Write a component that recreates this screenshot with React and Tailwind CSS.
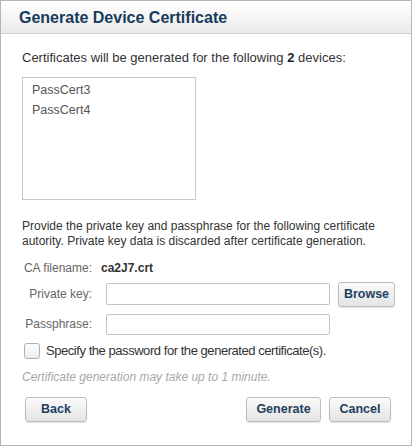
const devices = ['PassCert3', 'PassCert4'];

const Button = ({ children, className = '' }) => (
  <button
    className={`shrink-0 h-[25px] rounded-[3px] border border-[#bdbdbd] bg-gradient-to-b from-[#fbfbfb] to-[#e4e4e4] text-[12.5px] font-bold text-[#1e3f5f] shadow-[0_1px_1px_rgba(0,0,0,0.12)] ${className}`}
  >
    {children}
  </button>
);

const App = () => {
  return (
    <div className="w-[413px] h-[448px] bg-white" style={{ fontFamily: '"Liberation Sans", Arial, sans-serif' }}>
      <div className="w-[412px] h-[446px] border border-[#b5b5b5] flex flex-col">
        <div className="h-[33px] shrink-0 border-b border-[#cfcfcf] bg-gradient-to-b from-[#ffffff] to-[#ebebeb] flex items-center pl-[18px] pt-[1px]">
          <h1 className="text-[16px] font-bold text-[#173b5c] leading-none">Generate Device Certificate</h1>
        </div>

        <div className="pl-[21px] pr-[20px] pt-[16px] text-[12px] text-[#333]">
          <p className="text-[13px] leading-[16px]">
            Certificates will be generated for the following <b className="text-[#222]">2</b> devices:
          </p>

          <div className="mt-[11px] w-[174px] h-[123px] border border-[#c8c8c8] pt-[2px] pl-[9px]">
            {devices.map((d) => (
              <div key={d} className="text-[12.5px] leading-[20px] text-[#555]">{d}</div>
            ))}
          </div>

          <p className="mt-[19px] leading-[15px]">
            Provide the private key and passphrase for the following certificate autority. Private key data is discarded after certificate generation.
          </p>

          <div className="mt-[11px] flex items-center h-[16px] leading-[16px]">
            <span className="shrink-0 w-[70px] text-right text-[#666]">CA filename:</span>
            <span className="ml-[9px] font-bold text-[#333]">ca2J7.crt</span>
          </div>

          <div className="mt-[6px] flex items-center h-[24px]">
            <span className="shrink-0 w-[70px] text-right text-[#666]">Private key:</span>
            <input className="shrink-0 ml-[14px] w-[224px] h-[22px] rounded-[2px] border border-[#c4c4c4] bg-white outline-none" />
            <Button className="ml-[8px] w-[57px]">Browse</Button>
          </div>

          <div className="mt-[7px] flex items-center h-[22px]">
            <span className="shrink-0 w-[70px] text-right text-[#666]">Passphrase:</span>
            <input className="shrink-0 ml-[14px] w-[224px] h-[21px] rounded-[2px] border border-[#c4c4c4] bg-white outline-none" />
          </div>

          <label className="mt-[8px] flex items-center h-[16px]">
            <span className="shrink-0 ml-[2px] w-[16px] h-[16px] rounded-[3px] border border-[#b0b0b0] bg-gradient-to-b from-[#ffffff] to-[#ececec]" />
            <span className="ml-[6px] text-[13px] tracking-[-0.45px] text-[#333]">Specify the password for the generated certificate(s).</span>
          </label>

          <p className="mt-[10px] leading-[16px] italic text-[#a8a8a8]">
            Certificate generation may take up to 1 minute.
          </p>

          <div className="mt-[12px] flex items-center">
            <Button className="ml-[3px] w-[62px]">Back</Button>
            <Button className="ml-auto w-[75px]">Generate</Button>
            <Button className="ml-[8px] w-[62px]">Cancel</Button>
          </div>
        </div>
      </div>
    </div>
  );
};

export default App;
